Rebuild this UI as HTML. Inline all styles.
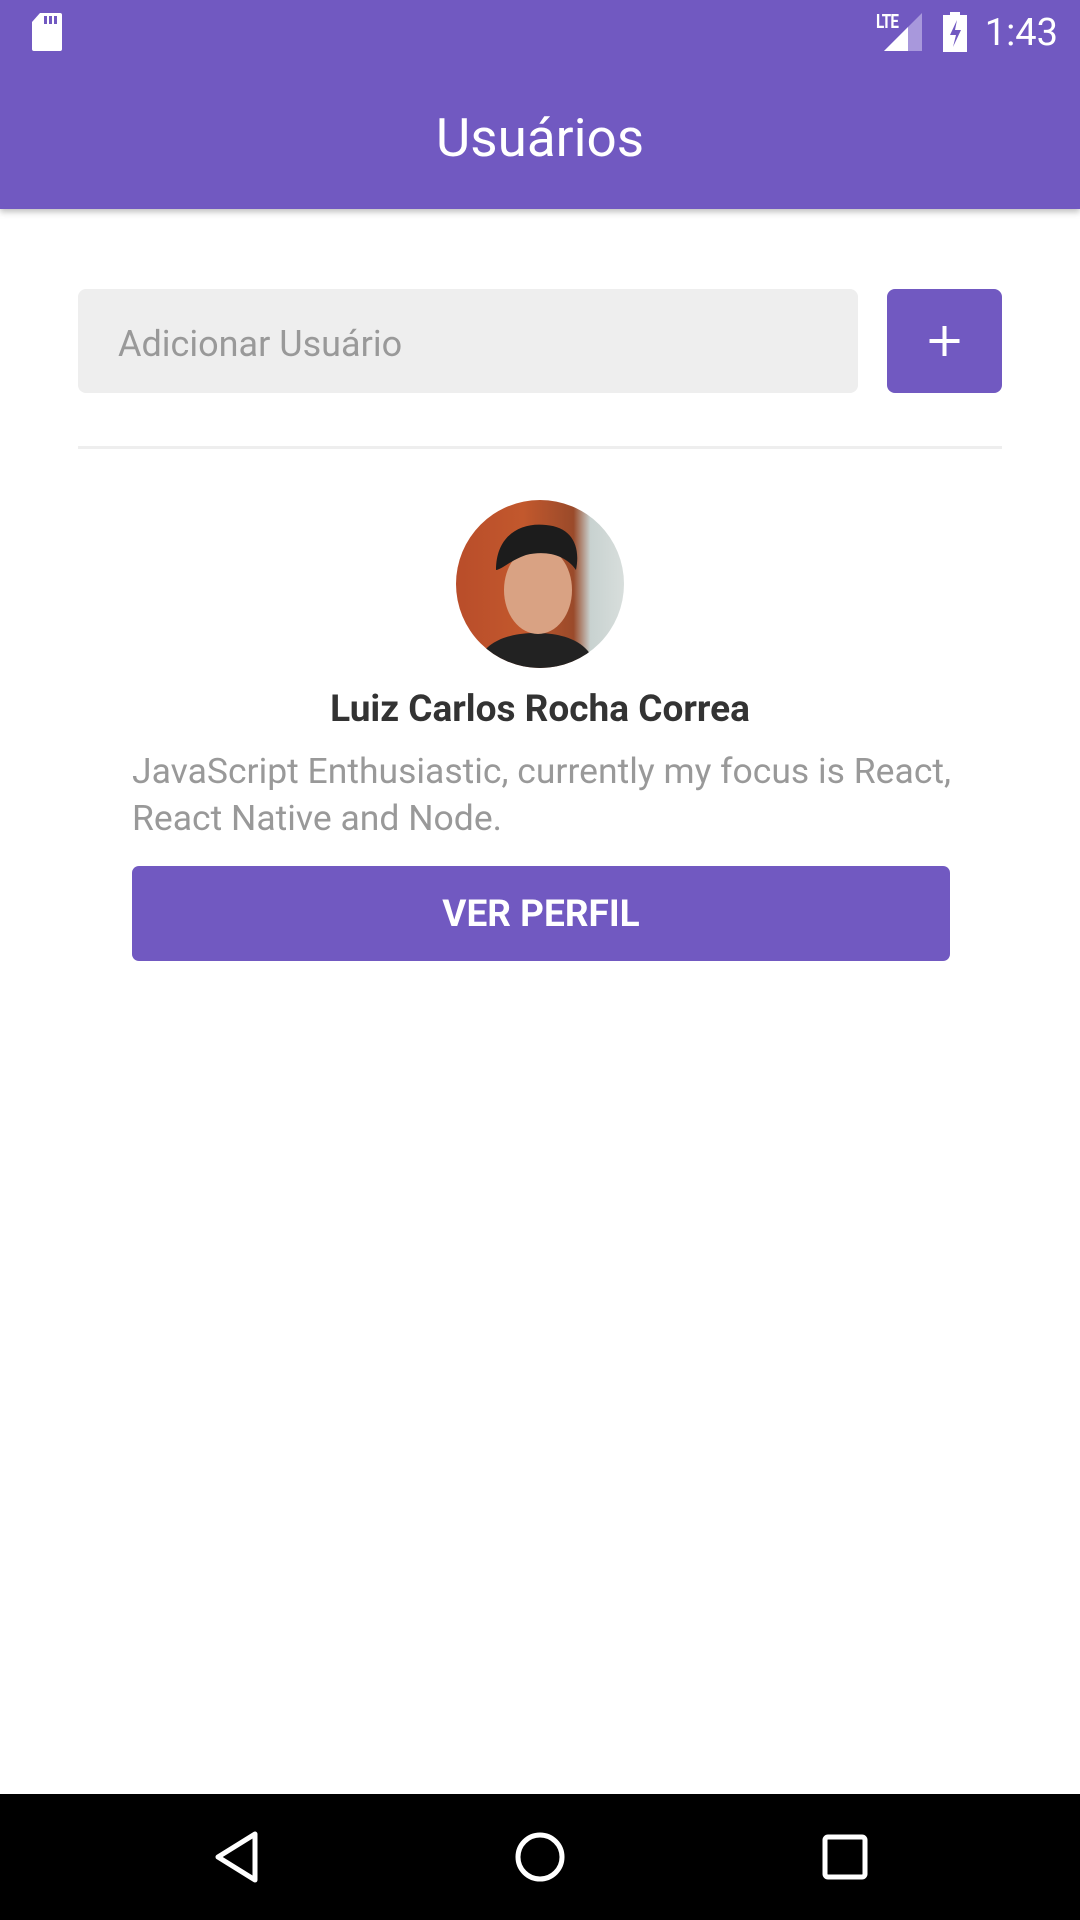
<!DOCTYPE html>
<html><head><meta charset="utf-8"><style>
*{margin:0;padding:0;box-sizing:border-box}
body{width:1080px;height:1920px;background:#fff;font-family:"Roboto","Liberation Sans",sans-serif;position:relative;overflow:hidden}
.hdr{position:absolute;left:0;top:0;width:1080px;height:209px;background:#7159c1;box-shadow:0 3px 6px rgba(0,0,0,.25)}
.title{position:absolute;top:107px;width:100%;text-align:center;color:#fff;font-size:53px;line-height:62px}
.time{position:absolute;right:22px;top:11px;color:#fff;font-size:38px}
.inp{position:absolute;left:78px;top:289px;width:780px;height:104px;background:#eee;border-radius:8px;color:#999;font-size:36px;line-height:110px;padding-left:40px}
.plus{position:absolute;left:887px;top:289px;width:115px;height:104px;background:#7159c1;border-radius:8px}
.div{position:absolute;left:78px;top:446px;width:924px;height:3px;background:#eee}
.av{position:absolute;left:456px;top:500px;width:168px;height:168px;border-radius:50%;overflow:hidden;background:linear-gradient(90deg,#b94d2a 0%,#c2582d 40%,#9a4a2a 70%,#c8d2d0 80%,#d8dedc 100%)}
.name{position:absolute;top:688px;width:100%;text-align:center;font-weight:bold;color:#333;font-size:37px}
.bio{position:absolute;left:132px;top:748px;width:830px;color:#999;font-size:35.5px;line-height:47px}
.btn{position:absolute;left:132px;top:866px;width:818px;height:95px;background:#7159c1;border-radius:7px;color:#fff;font-weight:bold;font-size:37px;text-align:center;line-height:97px}
.nav{position:absolute;left:0;top:1794px;width:1080px;height:126px;background:#000}
</style></head><body>
<div class="hdr">
<svg style="position:absolute;left:32px;top:13px" width="30" height="38" viewBox="0 0 30 38"><path d="M8 0H28a2 2 0 0 1 2 2V36a2 2 0 0 1-2 2H2a2 2 0 0 1-2-2V9Z" fill="#fff"/><rect x="12" y="3" width="3" height="8" fill="#7159c1"/><rect x="17" y="3" width="3" height="8" fill="#7159c1"/><rect x="22" y="3" width="3" height="8" fill="#7159c1"/></svg>
<div style="position:absolute;left:876px;top:10px;color:#fff;font-size:19px;font-weight:bold;letter-spacing:-1px;transform:scaleX(.8);transform-origin:left">LTE</div>
<svg style="position:absolute;left:884px;top:13px" width="38" height="38" viewBox="0 0 38 38"><path d="M0 38 38 0V38Z" fill="#a898dc"/><path d="M0 38 24 14V38Z" fill="#fff"/></svg>
<svg style="position:absolute;left:943px;top:12px" width="24" height="40" viewBox="0 0 24 40"><rect x="7" y="0" width="10" height="4" fill="#fff"/><rect x="0" y="3" width="24" height="37" fill="#fff"/><path d="M14 8 7 23h6l-3 12 8-17h-6z" fill="#7159c1"/></svg>
<div class="time">1:43</div>
<div class="title">Usuários</div>
</div>
<div class="inp">Adicionar Usuário</div>
<div class="plus"><svg width="115" height="104"><path d="M57.5 37v30M42.5 52h30" stroke="#fff" stroke-width="4"/></svg></div>
<div class="div"></div>
<div class="av"><svg width="168" height="168" viewBox="0 0 168 168"><path d="M20 168c5-25 30-35 60-35s55 10 60 35z" fill="#222"/><ellipse cx="82" cy="90" rx="34" ry="44" fill="#d9a283"/><path d="M40 70c0-35 25-48 50-45 25 2 35 20 30 45-10-15-30-20-50-15-15 5-25 15-30 15z" fill="#1c1c1c"/></svg></div>
<div class="name">Luiz Carlos Rocha Correa</div>
<div class="bio">JavaScript Enthusiastic, currently my focus is React,<br>React Native and Node.</div>
<div class="btn">VER PERFIL</div>
<div class="nav">
<svg style="position:absolute;left:213px;top:36px" width="48" height="54" viewBox="0 0 48 54"><path d="M42 4 5 27 42 50Z" fill="none" stroke="#fff" stroke-width="5" stroke-linejoin="round"/></svg>
<svg style="position:absolute;left:514px;top:37px" width="52" height="52"><circle cx="26" cy="26" r="22" fill="none" stroke="#fff" stroke-width="5"/></svg>
<svg style="position:absolute;left:822px;top:40px" width="46" height="46"><rect x="3" y="3" width="40" height="40" rx="3" fill="none" stroke="#fff" stroke-width="5"/></svg>
</div>
</body></html>
